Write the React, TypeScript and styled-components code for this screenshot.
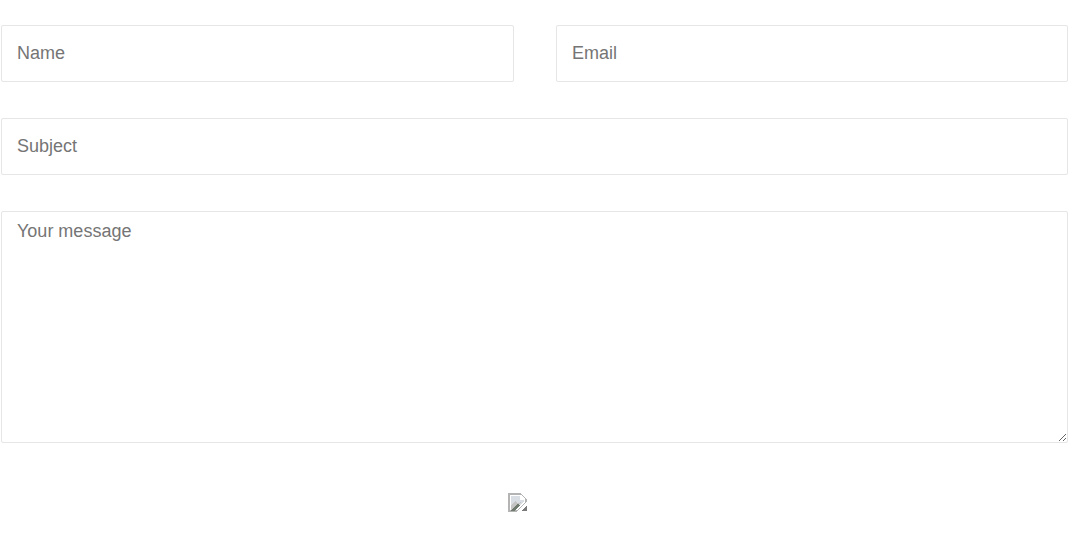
import React from "react";
import styled, { createGlobalStyle } from "styled-components";

const Global = createGlobalStyle`
  html, body { margin: 0; padding: 0; background: #fff; }
  * { box-sizing: border-box; }
`;

const Form = styled.form`
  width: 1070px;
  height: 559px;
  padding: 25px 2px 0 1px;
  display: flex;
  flex-direction: column;
  gap: 36px;
`;

const Row = styled.div`
  display: grid;
  grid-template-columns: 513px 512px;
  column-gap: 42px;
`;

const fieldStyles = `
  display: block;
  width: 100%;
  border: 1px solid #e6e6e6;
  border-radius: 2px;
  background: #fff;
  padding: 0 15px;
  font-family: "Liberation Sans", Arial, sans-serif;
  font-size: 18px;
  color: #333;
  outline: none;
`;

const Field = styled.input`
  ${fieldStyles}
  height: 57px;
`;

const Message = styled.textarea`
  ${fieldStyles}
  height: 232px;
  padding-top: 9px;
  padding-bottom: 9px;
  resize: vertical;
  margin: 0;
`;

const Submit = styled.div`
  display: flex;
  justify-content: flex-start;
  padding: 14px 0 0 507px;
  margin-top: 0;
`;

const BrokenImage = () => (
  <svg width="20" height="19" viewBox="0 0 20 19" shapeRendering="crispEdges" aria-hidden="true">
    <path d="M1 1h12l5 5v3l-9 9H1z" fill="#fff" stroke="#b4b4b4" strokeWidth="1.4" />
    <path d="M3 3h9v4h4v1l-4 4H3z" fill="#d8dee4" />
    <path d="M3 12l4-4 3 2 3-1-4 4-3 4H3z" fill="#c4c4c4" />
    <path d="M2 18l7-7 3 1-6 6z" fill="#6f7a6f" />
    <path d="M13 18l6-6v6z" fill="#7a7a7a" />
  </svg>
);

export default function App() {
  return (
    <>
      <Global />
      <Form>
        <Row>
          <Field placeholder="Name" />
          <Field placeholder="Email" />
        </Row>
        <Field placeholder="Subject" />
        <Message placeholder="Your message" />
        <Submit>
          <BrokenImage />
        </Submit>
      </Form>
    </>
  );
}
